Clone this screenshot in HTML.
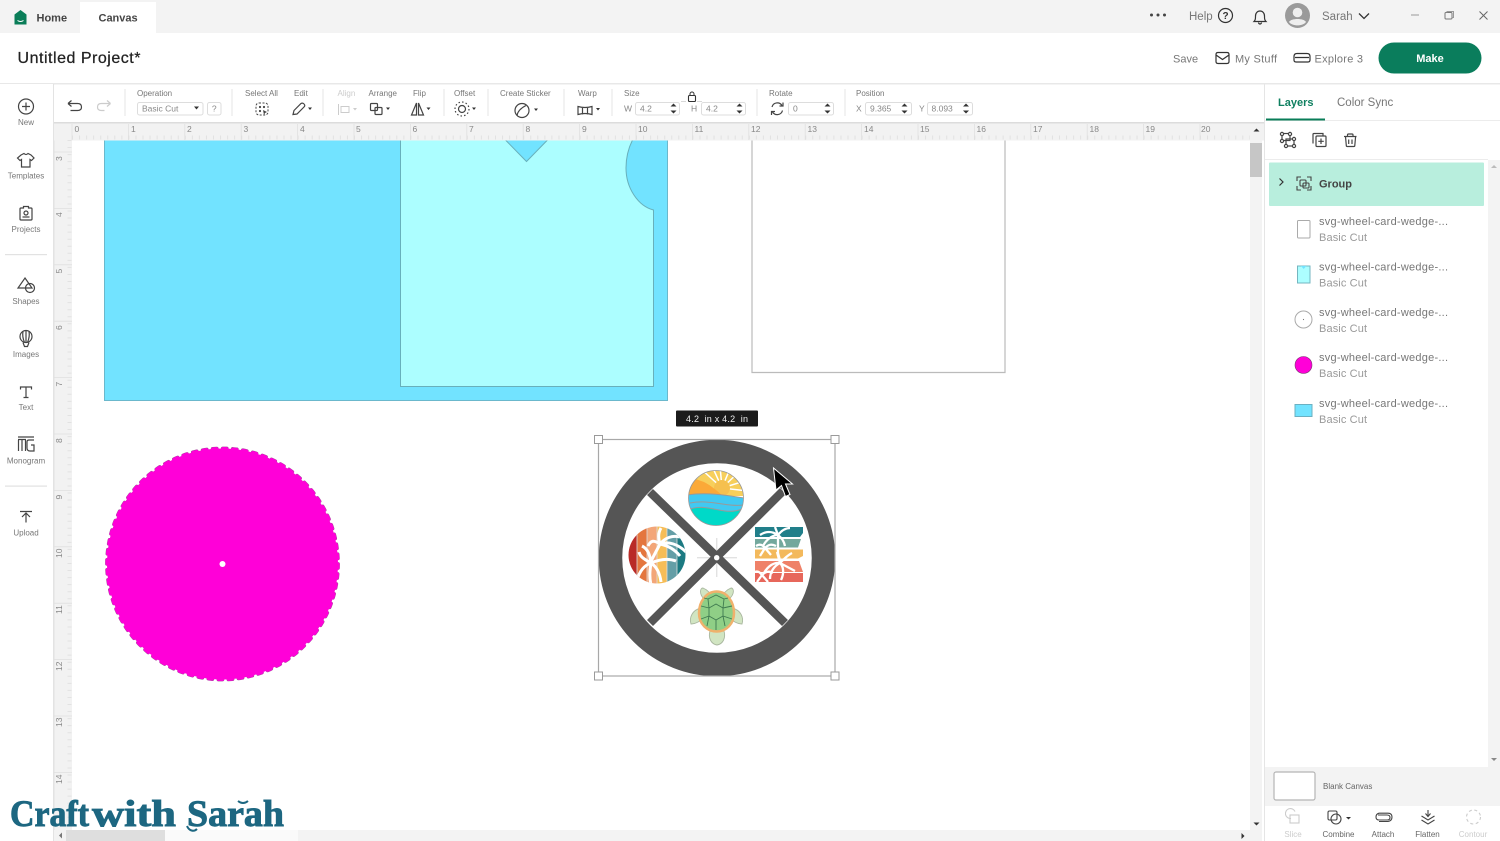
<!DOCTYPE html>
<html lang="en"><head><meta charset="utf-8"><title>Canvas</title>
<style>
html,body{margin:0;padding:0;background:#fff;width:1500px;height:841px;overflow:hidden}
svg{display:block;position:absolute;left:0;top:0;filter:blur(.3px)}
text{font-family:"Liberation Sans",sans-serif}
.lb{font-size:8px;fill:#777}
.sl{font-size:8px;fill:#777;text-anchor:middle}
.rn{font-size:8.5px;fill:#888}
.ic{fill:none;stroke:#444;stroke-width:1.2}
.ln{font-size:11px;fill:#777}
.ls{font-size:11px;fill:#999}
.sep{stroke:#e6e6e6;stroke-width:1}
.inp{fill:#fff;stroke:#ddd;stroke-width:1}
.iv{font-size:8.5px;fill:#888}
.ar{fill:#333}
.lg{font-family:"Liberation Serif",serif;font-size:37px;font-weight:700;fill:#1d6781;stroke:#1d6781;stroke-width:.9}
</style></head><body>
<svg width="1500" height="841" viewBox="0 0 1500 841" xmlns="http://www.w3.org/2000/svg">
<defs>
<clipPath id="cs"><circle cx="716" cy="498" r="27.5"/></clipPath>
<clipPath id="cl"><circle cx="657" cy="555" r="28.5"/></clipPath>
</defs>
<rect width="1500" height="841" fill="#fff"/>

<!-- top bar -->
<rect width="1500" height="33" fill="#f3f3f3"/>
<rect x="80" y="2" width="76" height="31" fill="#fff"/>
<path d="M14.500 14.500L20.500 10L26.500 14.500V24.500H14.500Z" fill="#0a7d58"/>
<path d="M17.500 20.500q3 2 6 0" stroke="#fff" stroke-width="1" fill="none"/>
<text x="36.500" y="21.500" font-size="11px" font-weight="700" fill="#444">Home</text>
<text x="98.500" y="21.500" font-size="11px" font-weight="700" fill="#444">Canvas</text>
<circle cx="1151.500" cy="15" r="1.500" fill="#444"/><circle cx="1158" cy="15" r="1.500" fill="#444"/><circle cx="1164.500" cy="15" r="1.500" fill="#444"/>
<text x="1189" y="20" font-size="11.500px" fill="#777">Help</text>
<circle cx="1225.500" cy="15.500" r="7" fill="none" stroke="#333" stroke-width="1.200"/>
<text x="1225.500" y="19" font-size="10px" font-weight="700" fill="#333" text-anchor="middle">?</text>
<path d="M1254 21.500c1.500-1.500 1.500-3 1.500-5.500 0-3 2-5 4.500-5s4.500 2 4.500 5c0 2.500 0 4 1.500 5.500ZM1258.500 22.500a1.500 1.500 0 0 0 3 0" fill="none" stroke="#333" stroke-width="1.200"/>
<circle cx="1297.500" cy="15.500" r="12.500" fill="#9a9a9a"/>
<circle cx="1297.500" cy="12.500" r="4.800" fill="#eee"/>
<path d="M1289 22c2-4 15-4 17 0-3 4.500-14 4.500-17 0Z" fill="#eee"/>
<text x="1322" y="20" font-size="11.500px" fill="#777">Sarah</text>
<path d="M1359 13.500l5 5 5-5" fill="none" stroke="#333" stroke-width="1.300"/>
<path d="M1411 15h8" stroke="#999" stroke-width="1"/>
<rect x="1445" y="12.500" width="7" height="6.500" rx="1" fill="none" stroke="#777" stroke-width="1"/>
<path d="M1447 12.500v-1h6.500v6h-1.500" fill="none" stroke="#999" stroke-width="1"/>
<path d="M1479.500 11.500l8 8M1487.500 11.500l-8 8" stroke="#666" stroke-width="1"/>

<!-- title row -->
<text x="17.500" y="63" font-size="16px" textLength="123" lengthAdjust="spacing" fill="#222" stroke="#222" stroke-width=".25">Untitled Project*</text>
<text x="1173" y="62.500" font-size="11px" fill="#777">Save</text>
<path d="M1216 54.500q0-2 2-2h9q2 0 2 2v7q0 2-2 2h-9q-2 0-2-2Z M1216 55l6.500 4.500L1229 55" fill="none" stroke="#333" stroke-width="1.200"/>
<text x="1235" y="62.500" font-size="11px" textLength="42" fill="#777">My Stuff</text>
<path d="M1297 53.500h10q3 0 3 3v3.500q0 2-2 2h-12q-2 0-2-2v-3.500q0-3 3-3ZM1295 57.500h14" fill="none" stroke="#333" stroke-width="1.200"/>
<text x="1314.500" y="62.500" font-size="11px" textLength="48.500" fill="#777">Explore 3</text>
<rect x="1378.500" y="42.500" width="103" height="31" rx="15.500" fill="#0a7d5c"/>
<text x="1430" y="62" font-size="11px" font-weight="700" fill="#fff" text-anchor="middle">Make</text>
<rect x="0" y="83" width="1500" height="1.500" fill="#e8e8e8"/>

<!-- canvas shapes -->
<path d="M104.500 140V400.500H667.500V140Z" fill="#72e3ff" stroke="#6bb8cc" stroke-width="1"/>
<path d="M400.500 140V386.500H653.500V210C638 206 626 188 626 168C626 158 628 149 632.500 140H547.500L526.500 161.500L505.500 140Z" fill="#acfeff" stroke="#68b0bb" stroke-width="1"/>
<path d="M752 140V372.500H1005V140" fill="#fff" stroke="#bbb" stroke-width="1.200"/>

<!-- magenta scalloped circle -->
<circle cx="222.500" cy="564" r="115.500" fill="none" stroke="#a04a98" stroke-width="3.800" stroke-linecap="round" stroke-dasharray="4 6.080"/>
<circle cx="222.500" cy="564" r="115.500" fill="#ff00d8" stroke="#ff00d8" stroke-width="3" stroke-linecap="round" stroke-dasharray="4 6.080"/>
<circle cx="222.500" cy="564" r="3" fill="#fff"/>

<!-- size tag -->
<rect x="676" y="410.500" width="82" height="16" rx="1" fill="#1b1b1b"/>
<text x="686" y="422" font-size="9px" fill="#eee" textLength="62" style="white-space:pre">4.2  in x 4.2  in</text>

<!-- wheel -->
<circle cx="717" cy="558" r="106.500" fill="#fff" stroke="#555" stroke-width="23.500"/>
<path d="M697 557.700H737M716.700 538V577" stroke="#e2e2e2" stroke-width="1.400"/>
<path d="M650 492L785 623M783 491L650 623" stroke="#555" stroke-width="8.500"/>
<circle cx="716.700" cy="557.700" r="3.200" fill="#fff" stroke="#555" stroke-width="1"/>

<!-- sun -->
<g clip-path="url(#cs)">
<rect x="688" y="470" width="56" height="56" fill="#fff"/>
<path d="M688 470H744V496H688Z" fill="#f7cf5b"/>
<path d="M722 488L700 468M722 488L712 466M722 488L720 466M722 488L731 466M722 488L741 470M722 488L748 480M722 488L748 491" stroke="#fff" stroke-width="1.500"/>
<circle cx="722" cy="488" r="8" fill="#f5c04f"/>
<path d="M688 482C690 476 698 480 704 482C712 486 718 492 722 495L688 496Z" fill="#fba938"/>
<path d="M688 495C705 492 725 495 744 498V512H688Z" fill="#41c9f2"/>
<path d="M688 510C700 504 715 510 725 511C733 512 740 510 744 508V527H688Z" fill="#00d9c8"/>
<path d="M688 495C705 492 725 495 744 498M690 503C710 499 725 507 744 505M688 510C700 504 715 510 725 511C733 512 740 510 744 508" fill="none" stroke="#999" stroke-width="1"/>
</g>
<circle cx="716" cy="498" r="27.500" fill="none" stroke="#999" stroke-width=".8"/>

<!-- left palm circle -->
<g clip-path="url(#cl)">
<rect x="628" y="526" width="9" height="60" fill="#b92b27"/>
<rect x="637" y="526" width="10" height="60" fill="#e4763e"/>
<rect x="647" y="526" width="10" height="60" fill="#f3a678"/>
<rect x="657" y="526" width="10" height="60" fill="#f6bd57"/>
<rect x="667" y="526" width="10" height="60" fill="#649ea6"/>
<rect x="677" y="526" width="9" height="60" fill="#1c7a82"/>
<path d="M637 526V586M647 526V586M657 526V586M667 526V586M677 526V586" stroke="#ddd" stroke-width=".8" fill="none"/>
<path d="M660 544C668 541 678 544 686 552M660 544C670 546 676 551 680 556M660 544C665 538 672 535 680 537M660 544C658 538 658 533 661 528M660 544C654 540 651 540 648 546M660 544L650 563" fill="none" stroke="#fff" stroke-width="3"/>
<path d="M651 563C645 565 640 570 637 580M651 563C650 555 648 549 642 546M651 563C642 558 640 556 639 552M651 563C660 559 668 558 676 561M651 563C657 567 660 574 661 582M651 563C650 570 649 576 651 585" fill="none" stroke="#fff" stroke-width="3"/>
</g>

<!-- right palm block -->
<path d="M755 527H803V533L800 537H755Z" fill="#217f8a"/>
<path d="M755 539H801L798 547.500H755Z" fill="#73a89d"/>
<path d="M755 549.500H803V556L798 558.500H755Z" fill="#f3b95c"/>
<path d="M755 561H799L803 572H755Z" fill="#ef8168"/>
<path d="M755 573H803V582H755Z" fill="#e7675b"/>
<path d="M778 535C772 531 766 531 760 535M778 535C772 535 766 540 763 546M778 535L775 527M778 535C782 530 786 528 790 528M778 535C782 538 784 541 785 546M778 535L778 553L781 564M780 563C774 562 768 566 764 573M780 563C774 566 770 572 770 579M780 563L795 571M780 563L777 552M780 563C785 558 788 555 792 553M780 563C784 567 784 574 781 580M765 548C762 544 759 544 756 546M765 548C769 544 772 544 776 546M765 548L760 556M765 548L771 555M762 575C759 571 757 571 755 572M762 575C766 571 770 571 773 573M762 575L757 582M762 575L768 582" fill="none" stroke="#fff" stroke-width="2.300"/>

<!-- turtle -->
<g stroke="#a9b79f" stroke-width=".9" fill="#d1e5c2">
<path d="M704 599C699 594 700 588 703 588C708 590 711 594 712 597Z"/>
<path d="M729 599C735 594 734 588 731 588C726 590 723 594 722 597Z"/>
<path d="M701 608C692 610 689 618 691 624C696 624 702 620 703 618Z"/>
<path d="M732 608C741 610 744 618 742 624C737 624 731 620 730 618Z"/>
<path d="M710 631C708 638 711 644 717 645C723 644 726 638 724 631Z"/>
</g>
<path d="M716.700 591.500C727 591.500 734 602 734 613C734 624 726 631.500 716.700 631.500C707 631.500 699 624 699 613C699 602 706 591.500 716.700 591.500Z" fill="#8fcf86" stroke="#f0b16c" stroke-width="2.500"/>
<path d="M716 604L723 608V616L716 620L709 616V608ZM709 608L708 599L716 595L724 599L723 608M708 599L704 598M724 599L728 598M709 608L701 606M723 608L732 606M709 616L701 619M723 616L732 619M709 616L707 626M723 616L725 626M716 620V630" fill="none" stroke="#3f7a50" stroke-width=".9"/>

<!-- selection -->
<rect x="598.500" y="439.500" width="236.500" height="236.500" fill="none" stroke="#a8a8a8" stroke-width="1.200"/>
<g fill="#fff" stroke="#9a9a9a" stroke-width="1">
<rect x="594.500" y="435.500" width="8" height="8"/><rect x="831" y="435.500" width="8" height="8"/>
<rect x="594.500" y="672" width="8" height="8"/><rect x="831" y="672" width="8" height="8"/>
</g>
<path d="M773.500 468L776 490L781.500 485.500L785.500 496.500L790 494.500L785.500 484L792.500 484Z" fill="#000" stroke="#fff" stroke-width="1"/>

<!-- left panel -->
<rect x="0" y="84" width="53" height="757" fill="#fff"/>
<rect x="53" y="84" width="1.500" height="757" fill="#e3e3e3"/>
<circle cx="26" cy="106.500" r="7.500" class="ic"/><path d="M26 102.500v8M22 106.500h8" class="ic"/>
<text x="26" y="125" class="sl">New</text>
<path d="M21 154l3-1.500q2 2 4 0l3 1.500 3 3-2.500 2.500-1.500-1V166H21.500V158.500l-1.500 1L17.500 157Z" class="ic" transform="translate(0,1)"/>
<text x="26" y="178.500" class="sl">Templates</text>
<path d="M21 208h2.500v-1.500h5V208H31q1 0 1 1v10q0 1-1 1H21q-1 0-1-1V209q0-1 1-1Z" class="ic"/><circle cx="26" cy="213" r="2" class="ic"/><path d="M22.500 217h7" class="ic"/>
<text x="26" y="232" class="sl">Projects</text>
<rect x="5" y="254" width="42" height="1.200" fill="#e2e2e2"/>
<path d="M25 278l7 10H18Z" class="ic"/><circle cx="30" cy="288" r="4.500" class="ic"/>
<text x="26" y="304" class="sl">Shapes</text>
<circle cx="26" cy="336.500" r="6" class="ic"/><path d="M23 342.500l1.500 4h3l1.500-4M26 330.500v12M23 331.500q-1 5 1.500 11M29 331.500q1 5-1.500 11" class="ic"/>
<text x="26" y="357" class="sl">Images</text>
<path d="M20.500 389.500v-2.500h11v2.500M26 387v10.500M23.500 397.500h5" class="ic"/>
<text x="26" y="410" class="sl">Text</text>
<path d="M18 437h16M18.500 440v11M22 440v11M25.500 440v11M18 439.500h8M34 440h-5q-2 0-2 2v6q0 3 3 3h4v-6h-3" class="ic"/>
<text x="26" y="463.500" class="sl">Monogram</text>
<rect x="5" y="485.500" width="42" height="1.200" fill="#e2e2e2"/>
<path d="M20 511.500h12M26 522.500v-9M22 517l4-4 4 4" class="ic" stroke-width="1.400"/>
<text x="26" y="535.500" class="sl">Upload</text>

<!-- ruler top -->
<rect x="54" y="122" width="1210" height="18.500" fill="#f2f2f2"/>
<rect x="54" y="122" width="1210" height="1.500" fill="#dcdcdc"/>
<path d="M72 137.500H1250" stroke="#e2e2e2" stroke-width="4" stroke-dasharray="1 6.050"/>
<path d="M72 124V140M128.400 124V140M184.800 124V140M241.200 124V140M297.600 124V140M354 124V140M410.400 124V140M466.800 124V140M523.200 124V140M579.600 124V140M636 124V140M692.400 124V140M748.800 124V140M805.200 124V140M861.600 124V140M918 124V140M974.400 124V140M1030.800 124V140M1087.200 124V140M1143.600 124V140M1200 124V140" stroke="#e0e0e0" stroke-width=".8"/>
<g class="rn">
<text x="74.500" y="132">0</text><text x="131" y="132">1</text><text x="187" y="132">2</text><text x="243.500" y="132">3</text><text x="300" y="132">4</text><text x="356" y="132">5</text><text x="412.500" y="132">6</text><text x="469" y="132">7</text><text x="525.500" y="132">8</text><text x="582" y="132">9</text><text x="638" y="132">10</text><text x="694.500" y="132">11</text><text x="751" y="132">12</text><text x="807.500" y="132">13</text><text x="864" y="132">14</text><text x="920" y="132">15</text><text x="976.500" y="132">16</text><text x="1033" y="132">17</text><text x="1089.500" y="132">18</text><text x="1145.500" y="132">19</text><text x="1201" y="132">20</text>
</g>
<path d="M1253.500 131.500l3-3 3 3Z" fill="#333"/>

<!-- ruler left -->
<rect x="54.500" y="140" width="17.500" height="690" fill="#f2f2f2"/>
<path d="M69.500 140V830" stroke="#e2e2e2" stroke-width="4" stroke-dasharray="1 6.050"/>
<path d="M54 152H72M54 208.400H72M54 264.800H72M54 321.200H72M54 377.600H72M54 434H72M54 490.400H72M54 546.800H72M54 603.200H72M54 659.600H72M54 716H72M54 772.400H72" stroke="#e0e0e0" stroke-width=".8"/>
<g class="rn">
<text transform="translate(62,161) rotate(-90)">3</text>
<text transform="translate(62,217) rotate(-90)">4</text>
<text transform="translate(62,273.500) rotate(-90)">5</text>
<text transform="translate(62,330) rotate(-90)">6</text>
<text transform="translate(62,386.500) rotate(-90)">7</text>
<text transform="translate(62,443) rotate(-90)">8</text>
<text transform="translate(62,499.500) rotate(-90)">9</text>
<text transform="translate(62,558) rotate(-90)">10</text>
<text transform="translate(62,614) rotate(-90)">11</text>
<text transform="translate(62,671) rotate(-90)">12</text>
<text transform="translate(62,727) rotate(-90)">13</text>
<text transform="translate(62,784) rotate(-90)">14</text>
</g>

<!-- toolbar -->
<rect x="54" y="84.500" width="1211" height="37.500" fill="#fff"/>
<path d="M68 103.500h9.500q4 0 4 3.500t-4 3.500h-7M68 103.500l3.500-3M68 103.500l3.500 3" class="ic" stroke="#333"/>
<path d="M110.500 103.500h-9q-4 0-4 3.500t4 3.500h3M110.500 103.500l-3.500-3M110.500 103.500l-3.500 3" fill="none" stroke="#ccc" stroke-width="1.200"/>
<g class="sep">
<path d="M125 89V116M232 89V116M323 89V116M444 89V116M488 89V116M564 89V116M612 89V116M757 89V116M845 89V116"/>
</g>
<text x="137" y="96" class="lb">Operation</text>
<rect x="137.500" y="102.500" width="65.500" height="12.500" rx="2" class="inp"/>
<text x="142" y="111.500" class="iv" fill="#888">Basic Cut</text>
<path d="M194 106.500h5l-2.500 3Z" class="ar"/>
<rect x="207.500" y="102.500" width="13.500" height="12.500" rx="2" class="inp"/>
<text x="214.300" y="111.500" class="iv" text-anchor="middle">?</text>

<text x="245" y="96" class="lb">Select All</text>
<rect x="256" y="103" width="12" height="12" rx="3" fill="none" stroke="#444" stroke-width="1" stroke-dasharray="2 1.500"/>
<circle cx="260" cy="107" r="1.100" fill="#444"/><circle cx="264" cy="107" r="1.100" fill="#444"/><circle cx="260" cy="111" r="1.100" fill="#444"/><path d="M263 110l4 2-2 1-1 2Z" fill="#444"/>
<text x="294" y="96" class="lb">Edit</text>
<path d="M293 114.500l1-4 7-7q1.500-1 3 .5t0 3l-7 7Z" class="ic"/><path d="M308 107.500h4l-2 2.500Z" class="ar"/>
<text x="337.500" y="96" class="lb" style="fill:#ccc">Align</text>
<path d="M338.500 104v11M341 106.500h8v6h-8Z" fill="none" stroke="#ccc" stroke-width="1"/><path d="M353 108h4l-2 2.500Z" fill="#ccc"/>
<text x="368.500" y="96" class="lb">Arrange</text>
<rect x="370.500" y="103.500" width="7" height="7" rx="1" class="ic"/><rect x="375" y="107.500" width="7" height="7" rx="1" class="ic"/><path d="M386 107.500h4l-2 2.500Z" class="ar"/>
<text x="413" y="96" class="lb">Flip</text>
<path d="M416.500 103L411.500 115H416.500ZM418.500 103L423.500 115H418.500Z" class="ic"/><path d="M426.500 107.500h4l-2 2.500Z" class="ar"/>
<text x="454" y="96" class="lb">Offset</text>
<circle cx="462" cy="109" r="3.500" class="ic"/><circle cx="462" cy="109" r="7" fill="none" stroke="#444" stroke-width="1.200" stroke-dasharray="1.500 2.150"/><path d="M472 107.500h4l-2 2.500Z" class="ar"/>
<text x="500" y="96" class="lb">Create Sticker</text>
<circle cx="522" cy="110.500" r="7" class="ic"/><path d="M517 115.500q1-6 9-10" class="ic"/><path d="M534 108.500h4l-2 2.500Z" class="ar"/>
<text x="578" y="96" class="lb">Warp</text>
<path d="M578 106.500q7 2 14 0v8q-7-2-14 0ZM582.500 107v7.500M587.500 107v7.500" class="ic"/><path d="M596 108h4l-2 2.500Z" class="ar"/>
<text x="624" y="96" class="lb">Size</text>
<path d="M681 101.500h5M697 101.500h5" stroke="#ccc" stroke-width=".8"/>
<rect x="688.500" y="95.500" width="7" height="6" rx="1" fill="#fff" stroke="#333" stroke-width="1.100"/><path d="M690 95.500v-1.500a2 2 0 0 1 4 0v1.500" fill="none" stroke="#333" stroke-width="1"/>
<text x="624" y="111.500" class="iv">W</text>
<rect x="635.500" y="102.500" width="44" height="12.500" rx="2" class="inp"/>
<text x="640" y="111.500" class="iv">4.2</text>
<path d="M670.500 106.500l3-3 3 3ZM670.500 110.500l3 3 3-3Z" class="ar"/>
<text x="691" y="111.500" class="iv">H</text>
<rect x="701.500" y="102.500" width="44" height="12.500" rx="2" class="inp"/>
<text x="706" y="111.500" class="iv">4.2</text>
<path d="M736.500 106.500l3-3 3 3ZM736.500 110.500l3 3 3-3Z" class="ar"/>
<text x="769" y="96" class="lb">Rotate</text>
<path d="M772 107a5.500 5.500 0 0 1 10-1.500M782.500 110.500a5.500 5.500 0 0 1-10 1.500" class="ic"/><path d="M783 102.500v3.500h-3.500M771.500 115v-3.500h3.500" class="ic"/>
<rect x="788.500" y="102.500" width="45" height="12.500" rx="2" class="inp"/>
<text x="793" y="111.500" class="iv">0</text>
<path d="M824.500 106.500l3-3 3 3ZM824.500 110.500l3 3 3-3Z" class="ar"/>
<text x="856" y="96" class="lb">Position</text>
<text x="856" y="111.500" class="iv">X</text>
<rect x="865.500" y="102.500" width="46" height="12.500" rx="2" class="inp"/>
<text x="870" y="111.500" class="iv">9.365</text>
<path d="M901.500 106.500l3-3 3 3ZM901.500 110.500l3 3 3-3Z" class="ar"/>
<text x="919" y="111.500" class="iv">Y</text>
<rect x="927.500" y="102.500" width="45" height="12.500" rx="2" class="inp"/>
<text x="931.500" y="111.500" class="iv">8.093</text>
<path d="M963 106.500l3-3 3 3ZM963 110.500l3 3 3-3Z" class="ar"/>

<!-- canvas scrollbars -->
<rect x="1250" y="140" width="12" height="690" fill="#f3f3f3"/>
<rect x="1250" y="143" width="12" height="34" fill="#c6c6c6"/>
<path d="M1253.500 822.500l3 3 3-3Z" fill="#333"/>
<rect x="54" y="830" width="1208" height="11" fill="#f3f3f3"/>
<rect x="66" y="830" width="99" height="11" fill="#dedede"/>
<rect x="165" y="830" width="133" height="11" fill="#fafafa"/>
<path d="M59 835.500l3-3v6Z" fill="#777"/>
<path d="M1241.500 833l3 3-3 3Z" fill="#333"/>

<!-- right panel -->
<rect x="1265" y="84.500" width="235" height="757" fill="#fff"/>
<rect x="1264" y="84.500" width="1" height="757" fill="#e5e5e5"/>
<text x="1278" y="106" font-size="11px" font-weight="700" fill="#0f8060">Layers</text>
<text x="1337" y="106" font-size="11.500px" fill="#777">Color Sync</text>
<rect x="1265" y="120" width="235" height="1" fill="#ececec"/>
<rect x="1266" y="118.500" width="59" height="2" fill="#0a7d58"/>
<!-- layer actions -->
<g class="ic" stroke="#444">
<rect x="1282" y="133.500" width="8" height="7"/><rect x="1286" y="139" width="8" height="7"/>
<circle cx="1282" cy="134" r="1.600" fill="#fff"/><circle cx="1290" cy="134" r="1.600" fill="#fff"/><circle cx="1282" cy="141" r="1.600" fill="#fff"/><circle cx="1294" cy="139" r="1.600" fill="#fff"/><circle cx="1294" cy="146" r="1.600" fill="#fff"/><circle cx="1286" cy="146" r="1.600" fill="#fff"/>
<path d="M1313 143.500v-9q0-1 1-1h9v2"/><rect x="1316" y="136" width="10" height="10.500" rx="1"/><path d="M1321 138.500v5.500M1318.300 141.300h5.500"/>
<path d="M1344 136.500h12.500M1347.500 136.500v-1.500q0-1 1-1h3.500q1 0 1 1v1.500M1345.500 136.500l.8 9q0 1 1 1h6.500q1 0 1-1l.8-9M1348.700 139.500v4.500M1352 139.500v4.500"/>
</g>
<rect x="1265" y="159" width="223" height="1" fill="#ececec"/>
<rect x="1488" y="160" width="12" height="608" fill="#f3f3f3"/>
<path d="M1491 168l3-3 3 3Z" fill="#bbb"/>
<path d="M1491 758l3 3 3-3Z" fill="#888"/>
<rect x="1269" y="162.500" width="215" height="43.500" rx="1" fill="#b8eedd"/>
<path d="M1279.500 179.500l3.500 3.500-3.500 3.500" fill="none" stroke="#333" stroke-width="1.200" transform="translate(0,-1)"/>
<path d="M1297 181v-4h4M1307 177h4v4M1297 186v4h4M1311 186v4h-4" fill="none" stroke="#444" stroke-width="1.100"/>
<rect x="1300" y="180" width="6" height="6" rx="1" fill="none" stroke="#444" stroke-width="1.100"/><rect x="1303" y="183" width="6" height="5" rx="1" fill="none" stroke="#444" stroke-width="1.100"/>
<text x="1319" y="187.500" font-size="11px" font-weight="700" fill="#444">Group</text>

<rect x="1297.500" y="220.500" width="12.500" height="17.500" rx="1" fill="#fff" stroke="#aaa" stroke-width="1"/>
<text x="1319" y="225" class="ln" textLength="129">svg-wheel-card-wedge-...</text>
<text x="1319" y="241" class="ls" textLength="48">Basic Cut</text>

<rect x="1297.500" y="266" width="12.500" height="17" fill="#acfeff" stroke="#75b6c0" stroke-width="1"/>
<path d="M1301 266l2.700 3 2.700-3Z" fill="#72e3ff"/>
<text x="1319" y="270.500" class="ln" textLength="129">svg-wheel-card-wedge-...</text>
<text x="1319" y="286.500" class="ls" textLength="48">Basic Cut</text>

<circle cx="1303.500" cy="319.500" r="8.500" fill="#fff" stroke="#aaa" stroke-width="1"/><circle cx="1303.500" cy="319.500" r=".6" fill="#777"/>
<text x="1319" y="316" class="ln" textLength="129">svg-wheel-card-wedge-...</text>
<text x="1319" y="332" class="ls" textLength="48">Basic Cut</text>

<circle cx="1303.500" cy="365" r="8.500" fill="#ff00d8" stroke="#7a3a70" stroke-width=".6"/>
<text x="1319" y="361" class="ln" textLength="129">svg-wheel-card-wedge-...</text>
<text x="1319" y="377" class="ls" textLength="48">Basic Cut</text>

<rect x="1295" y="404.500" width="17" height="12" fill="#72e3ff" stroke="#6bb0c2" stroke-width="1"/>
<text x="1319" y="407" class="ln" textLength="129">svg-wheel-card-wedge-...</text>
<text x="1319" y="423" class="ls" textLength="48">Basic Cut</text>

<!-- bottom of right panel -->
<rect x="1265" y="767" width="235" height="39" fill="#f3f3f3"/>
<rect x="1274" y="772" width="41" height="28" rx="2" fill="#fff" stroke="#b5b5b5" stroke-width="1.200"/>
<text x="1323" y="789" font-size="8px" fill="#666">Blank Canvas</text>
<rect x="1265" y="806" width="235" height="35" fill="#fff"/>
<g fill="none" stroke-width="1.100">
<path d="M1291 818.500a5 5 0 1 1 4-7" stroke="#ccc"/><rect x="1290" y="815" width="9" height="8" stroke="#ccc"/>
<rect x="1328" y="811" width="9" height="9" rx="1.500" stroke="#444"/><circle cx="1336" cy="819" r="5" stroke="#444"/>
<path d="M1378 815h9q3 0 3 2.500t-3 2.500h-8q-3 0-3-3t3-3.800h9q4 0 4 3.800t-4 4.500h-9" stroke="#444" transform="translate(0,0)"/>
<path d="M1428 810v6M1425.500 813.500l2.500 3 2.500-3M1421.500 816l6.500 4 6.500-4M1421.500 820l6.500 4 6.500-4" stroke="#444"/>
<circle cx="1473.500" cy="817" r="7" stroke="#ccc" stroke-dasharray="3 2.600"/>
</g>
<path d="M1346 817h5l-2.500 2.500Z" fill="#333"/>
<text x="1293" y="837" class="sl" style="fill:#ccc">Slice</text>
<text x="1338.500" y="837" class="sl" style="fill:#666">Combine</text>
<text x="1383" y="837" class="sl" style="fill:#666">Attach</text>
<text x="1427.500" y="837" class="sl" style="fill:#666">Flatten</text>
<text x="1473" y="837" class="sl" style="fill:#ccc">Contour</text>

<!-- watermark -->
<text x="10" y="826" class="lg" textLength="79" lengthAdjust="spacingAndGlyphs">Craft</text>
<text x="92" y="826" class="lg" textLength="84" lengthAdjust="spacingAndGlyphs">with</text>
<text x="187" y="826" class="lg" textLength="97" lengthAdjust="spacingAndGlyphs">Sarah</text>
<path d="M187 826c2 5 7 6 10 3M238 801q5 4 10 0" fill="none" stroke="#1d6781" stroke-width="2"/>
</svg>
</body></html>
